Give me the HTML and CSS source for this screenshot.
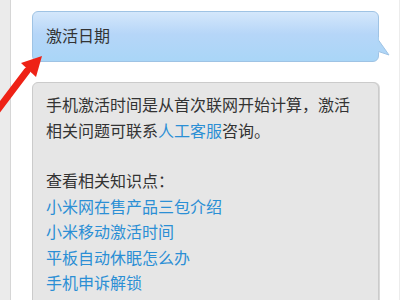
FILE: index.html
```html
<!DOCTYPE html>
<html>
<head>
<meta charset="utf-8">
<link rel="stylesheet" href="styles.css">
</head>
<body>
<div class="page">
  <div class="strip"></div>
  <div class="main">
    <div class="bubble">
      <span class="title">激活日期</span>
      <svg class="tail" width="14" height="22" viewBox="0 0 14 22">
        <path d="M0 1 L12 18 L0 14 Z" fill="#b0d6f7" stroke="#9fc3e4" stroke-width="1"/>
        <rect x="0" y="0" width="1.5" height="16" fill="#b0d6f7"/>
      </svg>
    </div>
    <div class="answer">
      <p>手机激活时间是从首次联网开始计算，激活相关问题可联系<a class="link">人工客服</a>咨询。</p>
      <p class="gap">查看相关知识点：</p>
      <a class="link">小米网在售产品三包介绍</a>
      <a class="link">小米移动激活时间</a>
      <a class="link">平板自动休眠怎么办</a>
      <a class="link">手机申诉解锁</a>
    </div>
  </div>
  <div class="edge"></div>
</div>
<svg class="arrow" width="50" height="120" viewBox="0 0 50 120">
  <path d="M-4 112 L27 71" stroke="#ee2216" stroke-width="7" stroke-linecap="round"/>
  <path d="M42 56 L21 63 L36 77 Z" fill="#ee2216"/>
</svg>
</body>
</html>
```
FILE: styles.css
```css
html, body {
  margin: 0;
  padding: 0;
  background: #fff;
  width: 400px;
  height: 300px;
  overflow: hidden;
  font-family: "Noto Sans CJK SC", "Noto Sans", sans-serif;
}
.page {
  display: flex;
  height: 300px;
}
.strip {
  width: 10px;
  background: #ebebeb;
  border-right: 1px solid #d6d6d6;
  flex: none;
}
.main {
  width: 347px;
  padding: 11px 0 0 21px;
  flex: none;
}
.edge {
  margin-left: auto;
  width: 1px;
  background: #ececec;
}
.bubble {
  position: relative;
  border: 1px solid #9fc3e4;
  border-radius: 6px;
  background: linear-gradient(#d4e7fb 0%, #b6d6f8 45%, #a9d6f7 100%);
  padding-left: 13px;
  display: flex;
  align-items: center;
  box-sizing: border-box;
  height: 51px;
}
.title {
  font-size: 16px;
  color: #333;
  margin-top: -4px;
}
.tail {
  position: absolute;
  right: -13px;
  top: 25px;
}
.answer {
  margin-top: 20px;
  background: #e6e6e6;
  border: 1px solid #cbcbcb;
  border-radius: 6px;
  box-shadow: 1px 0 0 #d9d9d9;
  padding: 9px 22px 20px 13px;
  font-size: 16px;
  line-height: 25.5px;
  color: #333;
  display: flex;
  flex-direction: column;
}
.answer p {
  margin: 0;
}
.answer .gap {
  margin-top: 25px;
}
.link {
  color: #2b8fd5;
  text-decoration: none;
}
.answer > .link {
  align-self: flex-start;
}
.arrow {
  position: absolute;
  left: 0;
  top: 0;
}
```
